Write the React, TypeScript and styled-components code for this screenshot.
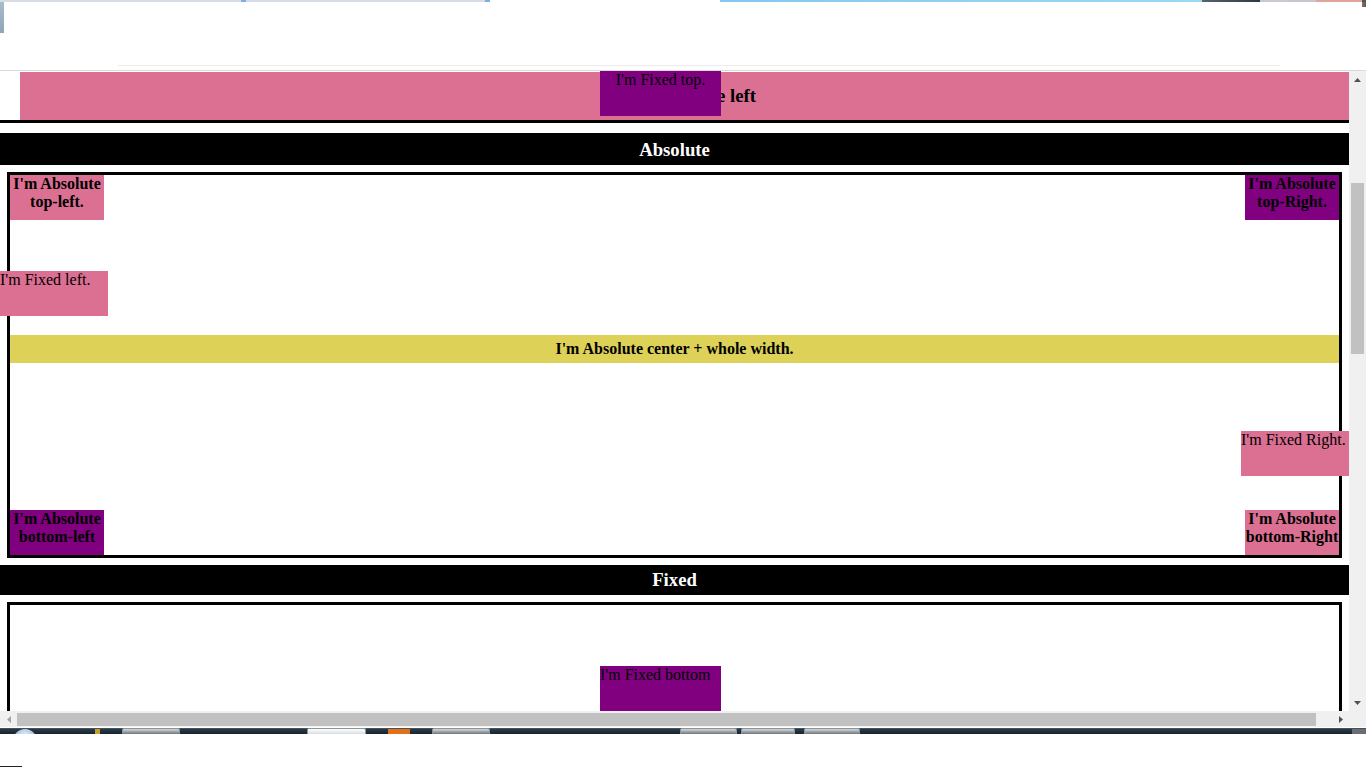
import React from "react";
import styled, { createGlobalStyle } from "styled-components";

const Global = createGlobalStyle`
  html, body { margin: 0; padding: 0; background: #ffffff; overflow: hidden; }
  body { font-family: "Liberation Serif", "Times New Roman", serif; font-size: 16px; color: #000; }
  * { box-sizing: border-box; }
`;

const PINK = "#db7093";
const PURPLE = "#800080";
const YELLOW = "#ddd158";

const Screen = styled.div`
  width: 1366px;
  height: 768px;
  display: flex;
  flex-direction: column;
  overflow: hidden;
`;

/* ---------- browser chrome (top) ---------- */
const Chrome = styled.div`
  height: 71px;
  display: flex;
  flex-direction: column;
  border-bottom: 1px solid #dadada;
  flex-shrink: 0;
`;

const Strip = styled.div`
  height: 2px;
  display: flex;
`;

const Seg = styled.div<{ $w: number; $bg: string }>`
  width: ${(p) => p.$w}px;
  flex-shrink: 0;
  background: ${(p) => p.$bg};
`;

const ChromeBody = styled.div`
  height: 63px;
  display: flex;
  justify-content: space-between;
  align-items: flex-start;
`;

const LeftEdge = styled.div`
  width: 4px;
  height: 31px;
  background: linear-gradient(180deg, #a9bccb 0%, #8fa4b8 100%);
`;

const RightEdge = styled.div`
  width: 4px;
  height: 5px;
  background: linear-gradient(90deg, #8a6a6a, #5a5a5a);
`;

const FaintLine = styled.div`
  height: 1px;
  margin-left: 118px;
  width: 1162px;
  background: #ededed;
`;

/* ---------- main viewport ---------- */
const MainRow = styled.div`
  height: 640px;
  display: flex;
  flex-shrink: 0;
`;

const Viewport = styled.div`
  width: 1349px;
  height: 640px;
  overflow: hidden;
  position: relative;
  background: #fff;
  display: flex;
  flex-direction: column;
`;

const RelativeSection = styled.div`
  padding-top: 1px;
  border-bottom: 3px solid #000;
  display: flex;
`;

const PinkBar = styled.h3`
  margin: 0 -14px 0 20px;
  flex: 1 0 auto;
  height: 48px;
  background: ${PINK};
  display: flex;
  align-items: center;
  justify-content: center;
  font-size: 18.72px;
  font-weight: bold;
`;

const SectionHeader = styled.h3<{ $h: number; $top: number; $pt: number }>`
  margin: ${(p) => p.$top}px 0 0;
  height: ${(p) => p.$h}px;
  padding-top: ${(p) => p.$pt}px;
  background: #000;
  color: #fff;
  font-size: 18.72px;
  font-weight: bold;
  display: flex;
  align-items: center;
  justify-content: center;
  flex-shrink: 0;
`;

const Container = styled.div<{ $h: number }>`
  margin: 7px 7px 0;
  height: ${(p) => p.$h}px;
  border: 3px solid #000;
  position: relative;
  flex-shrink: 0;
`;

const CornerBox = styled.div<{ $bg: string; $v: "top" | "bottom"; $h: "left" | "right" }>`
  position: absolute;
  ${(p) => p.$v}: 0;
  ${(p) => p.$h}: 0;
  width: 94px;
  height: 45px;
  background: ${(p) => p.$bg};
  font-weight: bold;
  font-size: 16px;
  line-height: 18px;
  text-align: center;
  white-space: nowrap;
`;

const CenterBar = styled.div`
  position: absolute;
  left: 0;
  right: 0;
  top: 160px;
  height: 28px;
  background: ${YELLOW};
  font-weight: bold;
  display: flex;
  align-items: center;
  justify-content: center;
`;

const FixedBox = styled.div<{ $w: number; $bg: string; $align: string }>`
  position: absolute;
  width: ${(p) => p.$w}px;
  height: 45px;
  background: ${(p) => p.$bg};
  text-align: ${(p) => p.$align};
  line-height: 18px;
  white-space: nowrap;
`;

const FixedTop = styled(FixedBox)`
  top: 0;
  left: 600px;
`;
const FixedBottom = styled(FixedBox)`
  bottom: 0;
  left: 600px;
`;
const FixedLeft = styled(FixedBox)`
  top: 200px;
  left: 0;
`;
const FixedRight = styled(FixedBox)`
  top: 360px;
  right: 0;
`;

/* ---------- scrollbars ---------- */
const VScroll = styled.div`
  width: 17px;
  background: #f0f0f0;
  display: flex;
  flex-direction: column;
`;

const ArrowBtn = styled.div<{ $w: number; $h: number }>`
  width: ${(p) => p.$w}px;
  height: ${(p) => p.$h}px;
  display: flex;
  align-items: center;
  justify-content: center;
  flex-shrink: 0;
`;

const VTrack = styled.div`
  flex: 1;
  padding: 95px 2px 0;
`;

const VThumb = styled.div`
  height: 171px;
  background: #c1c1c1;
`;

const HRow = styled.div`
  height: 16px;
  display: flex;
  background: #f0f0f0;
  flex-shrink: 0;
`;

const HTrack = styled.div`
  width: 1315px;
  padding: 2px 16px 1px 0;
`;

const HThumb = styled.div`
  height: 100%;
  background: #c1c1c1;
`;

const Corner = styled.div`
  width: 17px;
  background: #f0f0f0;
`;

/* ---------- taskbar ---------- */
const Taskbar = styled.div`
  margin-top: 1px;
  height: 6px;
  display: flex;
  align-items: flex-start;
  overflow: hidden;
  background: linear-gradient(180deg, #5b6b78 0px, #2a3a48 1px, #18242e 100%);
  flex-shrink: 0;
`;

const Orb = styled.div`
  margin-left: 13px;
  margin-top: 1px;
  width: 24px;
  height: 24px;
  border-radius: 50%;
  background: radial-gradient(circle at 50% 30%, #e8f2fa 0%, #8fb4d6 60%, #3a6a9a 100%);
  flex-shrink: 0;
`;

const Dot = styled.div<{ $ml: number; $w: number; $bg: string }>`
  margin-left: ${(p) => p.$ml}px;
  margin-top: 1px;
  width: ${(p) => p.$w}px;
  height: 6px;
  background: ${(p) => p.$bg};
  flex-shrink: 0;
`;

const TaskBtn = styled.div<{ $ml: number; $w: number; $light?: boolean }>`
  margin-left: ${(p) => p.$ml}px;
  width: ${(p) => p.$w}px;
  height: 6px;
  border-radius: 2px 2px 0 0;
  border: 1px solid #8a949c;
  border-bottom: none;
  background: ${(p) =>
    p.$light
      ? "linear-gradient(180deg, #ffffff 0%, #d8dde2 100%)"
      : "linear-gradient(180deg, #d6d9dc 0%, #6d757c 100%)"};
  flex-shrink: 0;
`;

const BottomArea = styled.div`
  flex: 1;
  display: flex;
  flex-direction: column;
  justify-content: flex-end;
  padding-bottom: 1px;
`;

const BottomLine = styled.div`
  width: 22px;
  height: 1px;
  background: #222;
`;

const Tri = ({ dir }: { dir: "up" | "down" | "left" | "right" }) => {
  const pts = {
    up: "0,4 7,4 3.5,0",
    down: "0,0 7,0 3.5,4",
    left: "4,0 4,7 0,3.5",
    right: "0,0 0,7 4,3.5",
  }[dir];
  const vertical = dir === "up" || dir === "down";
  return (
    <svg width={vertical ? 7 : 4} height={vertical ? 4 : 7} viewBox={vertical ? "0 0 7 4" : "0 0 4 7"}>
      <polygon points={pts} fill={dir === "left" ? "#a3a3a3" : "#505050"} />
    </svg>
  );
};

export default function App() {
  return (
    <Screen>
      <Global />
      <Chrome>
        <Strip>
          <Seg $w={241} $bg="#d6dde5" />
          <Seg $w={5} $bg="#7ab0e4" />
          <Seg $w={239} $bg="#d6dde5" />
          <Seg $w={5} $bg="#7ab0e4" />
          <Seg $w={230} $bg="#ffffff" />
          <Seg $w={482} $bg="linear-gradient(90deg, #86c8ee, #9ad8f6)" />
          <Seg $w={58} $bg="linear-gradient(90deg, #56646e, #2c3a44)" />
          <Seg $w={28} $bg="#c8ccd2" />
          <Seg $w={28} $bg="#c4c8ce" />
          <Seg $w={46} $bg="#e0a49c" />
          <Seg $w={4} $bg="#555" />
        </Strip>
        <ChromeBody>
          <LeftEdge />
          <RightEdge />
        </ChromeBody>
        <FaintLine />
      </Chrome>

      <MainRow>
        <Viewport>
          <RelativeSection>
            <PinkBar>I'm Relative left</PinkBar>
          </RelativeSection>

          <SectionHeader $h={32} $top={10} $pt={2}>Absolute</SectionHeader>
          <Container $h={386}>
            <CornerBox $bg={PINK} $v="top" $h="left">
              I'm Absolute
              <br />
              top-left.
            </CornerBox>
            <CornerBox $bg={PURPLE} $v="top" $h="right">
              I'm Absolute
              <br />
              top-Right.
            </CornerBox>
            <CenterBar>I'm Absolute center + whole width.</CenterBar>
            <CornerBox $bg={PURPLE} $v="bottom" $h="left">
              I'm Absolute
              <br />
              bottom-left
            </CornerBox>
            <CornerBox $bg={PINK} $v="bottom" $h="right">
              I'm Absolute
              <br />
              bottom-Right
            </CornerBox>
          </Container>

          <SectionHeader $h={30} $top={7} $pt={0}>Fixed</SectionHeader>
          <Container $h={400} />

          <FixedTop $w={121} $bg={PURPLE} $align="center">I'm Fixed top.</FixedTop>
          <FixedLeft $w={108} $bg={PINK} $align="left">I'm Fixed left.</FixedLeft>
          <FixedRight $w={108} $bg={PINK} $align="left">I'm Fixed Right.</FixedRight>
          <FixedBottom $w={121} $bg={PURPLE} $align="left">I'm Fixed bottom</FixedBottom>
        </Viewport>
        <VScroll>
          <ArrowBtn $w={17} $h={17}>
            <Tri dir="up" />
          </ArrowBtn>
          <VTrack>
            <VThumb />
          </VTrack>
          <ArrowBtn $w={17} $h={17}>
            <Tri dir="down" />
          </ArrowBtn>
        </VScroll>
      </MainRow>

      <HRow>
        <ArrowBtn $w={17} $h={16}>
          <Tri dir="left" />
        </ArrowBtn>
        <HTrack>
          <HThumb />
        </HTrack>
        <ArrowBtn $w={17} $h={16}>
          <Tri dir="right" />
        </ArrowBtn>
        <Corner />
      </HRow>

      <Taskbar>
        <Orb />
        <Dot $ml={58} $w={5} $bg="#c8a020" />
        <TaskBtn $ml={22} $w={58} />
        <TaskBtn $ml={127} $w={59} $light />
        <Dot $ml={22} $w={22} $bg="#e0701a" />
        <TaskBtn $ml={22} $w={58} />
        <TaskBtn $ml={190} $w={57} />
        <TaskBtn $ml={4} $w={54} />
        <TaskBtn $ml={9} $w={56} />
        <Dot $ml={492} $w={14} $bg="#6a6e72" />
      </Taskbar>

      <BottomArea>
        <BottomLine />
      </BottomArea>
    </Screen>
  );
}
